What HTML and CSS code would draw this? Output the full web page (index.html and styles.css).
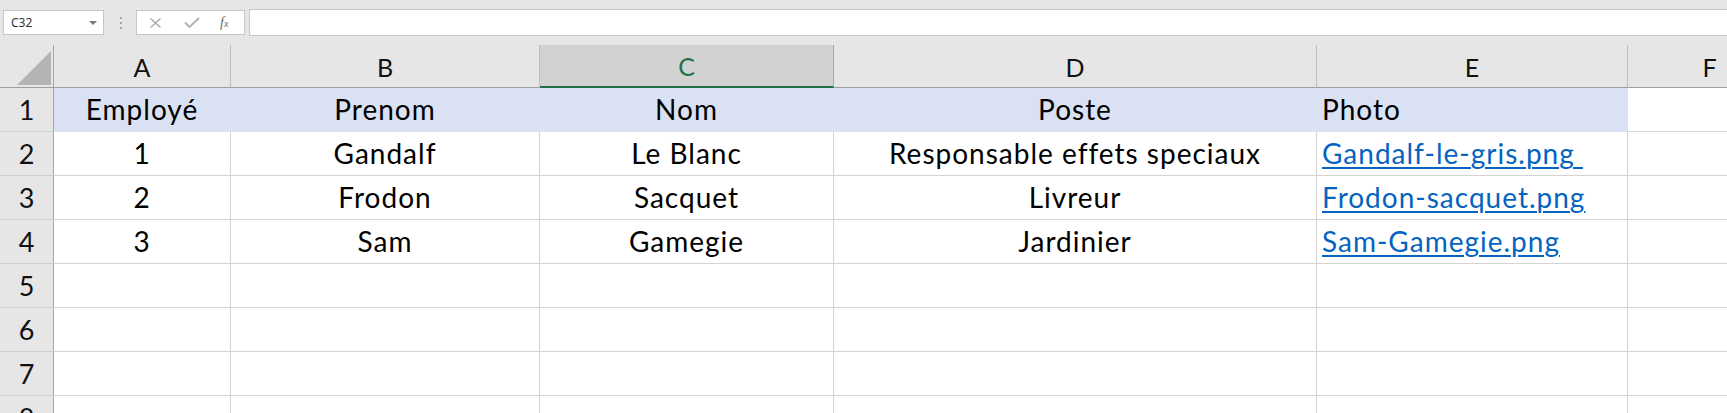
FILE: index.html
```html
<!DOCTYPE html>
<html lang="fr">
<head>
    <meta charset="UTF-8">
    <title>Classeur - Employés</title>
    <link rel="stylesheet" href="styles.css">
</head>
<body>
    <div class="toolbar">
        <div class="namebox">
            <span>C32</span>
            <span class="caret"></span>
        </div>
        <svg class="grip" width="4" height="12" viewBox="0 0 4 12">
            <rect x="1" y="0" width="2" height="2" fill="#a8a8a8"/>
            <rect x="1" y="5" width="2" height="2" fill="#a8a8a8"/>
            <rect x="1" y="10" width="2" height="2" fill="#a8a8a8"/>
        </svg>
        <div class="fx-buttons">
            <svg width="13" height="10" viewBox="0 0 13 10">
                <path d="M1.5 0.5 L11.5 9.5 M11.5 0.5 L1.5 9.5" stroke="#a6a6a6" stroke-width="1.3" fill="none"/>
            </svg>
            <svg width="16" height="11" viewBox="0 0 16 11">
                <path d="M1 5.5 L5.5 10 L15 1" stroke="#b3b3b3" stroke-width="2" fill="none"/>
            </svg>
            <span class="fx">f<small>x</small></span>
        </div>
        <div class="formula"></div>
    </div>

    <div class="sheet">
        <!-- en-têtes de colonnes -->
        <div class="corner"><span class="select-all"></span></div>
        <div class="col-head">A</div>
        <div class="col-head">B</div>
        <div class="col-head active">C</div>
        <div class="col-head">D</div>
        <div class="col-head">E</div>
        <div class="col-head">F</div>

        <div class="row-head">1</div>
        <div class="cell fill center">Employé</div>
        <div class="cell fill center">Prenom</div>
        <div class="cell fill center">Nom</div>
        <div class="cell fill center">Poste</div>
        <div class="cell fill">Photo</div>
        <div class="cell"></div>

        <div class="row-head">2</div>
        <div class="cell center">1</div>
        <div class="cell center">Gandalf</div>
        <div class="cell center">Le Blanc</div>
        <div class="cell center">Responsable effets speciaux</div>
        <div class="cell"><a href="#">Gandalf-le-gris.png&nbsp;</a></div>
        <div class="cell"></div>

        <div class="row-head">3</div>
        <div class="cell center">2</div>
        <div class="cell center">Frodon</div>
        <div class="cell center">Sacquet</div>
        <div class="cell center">Livreur</div>
        <div class="cell"><a href="#">Frodon-sacquet.png</a></div>
        <div class="cell"></div>

        <div class="row-head">4</div>
        <div class="cell center">3</div>
        <div class="cell center">Sam</div>
        <div class="cell center">Gamegie</div>
        <div class="cell center">Jardinier</div>
        <div class="cell"><a href="#">Sam-Gamegie.png</a></div>
        <div class="cell"></div>

        <div class="row-head">5</div>
        <div class="cell"></div><div class="cell"></div><div class="cell"></div>
        <div class="cell"></div><div class="cell"></div><div class="cell"></div>

        <div class="row-head">6</div>
        <div class="cell"></div><div class="cell"></div><div class="cell"></div>
        <div class="cell"></div><div class="cell"></div><div class="cell"></div>

        <div class="row-head">7</div>
        <div class="cell"></div><div class="cell"></div><div class="cell"></div>
        <div class="cell"></div><div class="cell"></div><div class="cell"></div>

        <div class="row-head">8</div>
        <div class="cell"></div><div class="cell"></div><div class="cell"></div>
        <div class="cell"></div><div class="cell"></div><div class="cell"></div>
    </div>
</body>
</html>
```

FILE: styles.css
```css
html, body {
    margin: 0;
    height: 413px;
    overflow: hidden;
    background: #ffffff;
    font-family: Lato, "Open Sans", sans-serif;
}

/* barre de formule */
.toolbar {
    display: flex;
    align-items: center;
    height: 45px;
    padding: 0 0 0 3px;
    box-sizing: border-box;
    background: #e6e6e6;
}

.namebox {
    display: flex;
    align-items: center;
    justify-content: space-between;
    width: 101px;
    height: 25px;
    padding: 0 6px 0 7px;
    box-sizing: border-box;
    background: #fff;
    border: 1px solid #c6c6c6;
    font-family: "Noto Sans", sans-serif;
    font-size: 12px;
    color: #333;
}

.caret {
    width: 0;
    height: 0;
    border-left: 4px solid transparent;
    border-right: 4px solid transparent;
    border-top: 4px solid #7a7a7a;
}

.grip {
    margin: 0 13px 0 15px;
}

.fx-buttons {
    display: flex;
    align-items: center;
    gap: 22px;
    width: 109px;
    height: 25px;
    padding-left: 12px;
    box-sizing: border-box;
    background: #fff;
    border: 1px solid #c6c6c6;
}

.fx {
    font-family: "Liberation Serif", serif;
    font-style: italic;
    font-size: 14px;
    color: #6b6b6b;
    margin-left: -2px;
}

.fx small {
    font-size: 10px;
}

.formula {
    flex: 1;
    height: 25px;
    margin-left: 4px;
    background: #fff;
    border: 1px solid #c6c6c6;
    border-right: none;
}

/* grille */
.sheet {
    display: grid;
    grid-template-columns: 54px 177px 309px 294px 483px 311px 164px;
    grid-template-rows: 43px;
    grid-auto-rows: 44px;
    width: 1792px;
}

.corner, .col-head, .row-head, .cell {
    box-sizing: border-box;
}

.corner {
    position: relative;
    background: #e6e6e6;
    border-right: 1px solid #a6a6a6;
    border-bottom: 1px solid #9e9e9e;
}

.select-all {
    position: absolute;
    right: 2px;
    bottom: 2px;
    width: 34px;
    height: 34px;
    background: #b4b4b4;
    clip-path: polygon(100% 0, 100% 100%, 0 100%);
}

.col-head {
    background: #e6e6e6;
    border-right: 1px solid #bdbdbd;
    border-bottom: 1px solid #9e9e9e;
    text-align: center;
    font-size: 25px;
    line-height: 42px;
    padding-top: 1px;
    color: #111;
}

.col-head.active {
    background: #d2d2d2;
    color: #217346;
    border-right-color: #a8a8a8;
    border-bottom: 2px solid #217346;
    line-height: 41px;
}

.row-head {
    background: #e6e6e6;
    border-right: 1px solid #a6a6a6;
    border-bottom: 1px solid #cfcfcf;
    text-align: center;
    font-size: 27px;
    line-height: 43px;
    color: #111;
}

.cell {
    border-right: 1px solid #d4d4d4;
    border-bottom: 1px solid #d4d4d4;
    padding: 0 5px;
    font-size: 28px;
    letter-spacing: 1px;
    line-height: 43px;
    white-space: pre;
    overflow: hidden;
    color: #000;
}

.cell.center {
    text-align: center;
}

.cell.fill {
    background: #d9e1f2;
    border-color: #d9e1f2;
}

.cell a {
    color: #0563c1;
    text-decoration: underline;
    text-decoration-thickness: 2px;
    text-underline-offset: 3px;
}
```
